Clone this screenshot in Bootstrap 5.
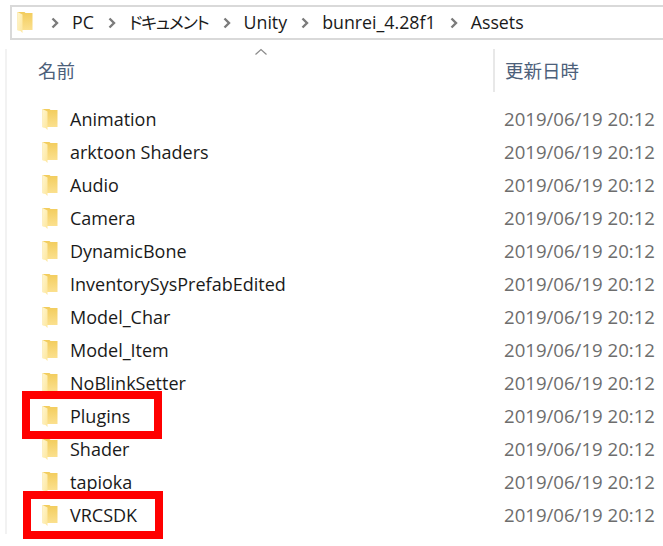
<!DOCTYPE html>
<html lang="ja">

<head>
    <meta charset="UTF-8">
    <meta name="viewport" content="width=device-width, initial-scale=1">
    <title>Assets</title>
    <link href="https://cdn.jsdelivr.net/npm/bootstrap@5.3.0/dist/css/bootstrap.min.css" rel="stylesheet">
    <style>
        html, body {
            height: 546px;
            overflow: hidden;
            background: #fff;
        }

        body {
            font-family: "Open Sans", "Noto Sans CJK JP", sans-serif;
            font-size: 18px;
            color: #1a1a1a;
            padding-top: 5px;
        }

        .crumb-bar {
            height: 35px;
            margin-left: 10px;
            padding-left: 5px;
            border: 2px solid #d9d9d9;
            border-right: 0;
            font-size: 17.800px;
        }

        .crumb-bar .folder-ico {
            margin-right: 4px;
        }

        .crumb-sep {
            margin: 0 13px 0 14px;
            flex: none;
        }

        .crumb-jp {
            font-feature-settings: "palt";
            letter-spacing: -1.200px;
            font-size: 17px;
        }

        .file-pane {
            margin: 9px 0 0 5px;
            height: 485px;
            border-left: 2px solid #f2f2f2;
        }

        .sort-mark {
            position: absolute;
            left: 247px;
            top: -1px;
        }

        .head-row {
            height: 43px;
            color: #4c607a;
            font-size: 18.500px;
        }

        .head-name {
            width: 486px;
            padding-left: 31px;
        }

        .head-date {
            height: 43px;
            padding-left: 10px;
            border-left: 2px solid #e8e8e8;
        }

        .file-list {
            margin-top: 11px;
        }

        .file-row {
            height: 33px;
        }

        .file-name {
            width: 497px;
            padding-left: 35px;
            flex: none;
            display: flex;
            align-items: center;
        }

        .file-name svg {
            margin-right: 12px;
            flex: none;
        }

        .file-date {
            color: #6d6d6d;
            font-size: 18.600px;
            padding-bottom: 2px;
            white-space: nowrap;
        }

        .red-box {
            position: absolute;
            width: 140px;
            height: 48px;
            border: 8px solid #f00;
        }

        .box-plugins {
            left: 22px;
            top: 391px;
        }

        .box-vrcsdk {
            left: 23px;
            top: 491px;
        }
    </style>
</head>

<body class="position-relative">
    <svg width="0" height="0" class="position-absolute">
        <defs>
            <linearGradient id="folderFront" x1="0" y1="0" x2="1" y2="1">
                <stop offset="0" stop-color="#fff6cf" />
                <stop offset="1" stop-color="#fde69c" />
            </linearGradient>
            <linearGradient id="folderBack" x1="0" y1="0" x2="0" y2="1">
                <stop offset="0" stop-color="#f2cc5c" />
                <stop offset="1" stop-color="#fbe08e" />
            </linearGradient>
            <symbol id="folder" viewBox="0 0 15 21">
                <path d="M0 0h7l1 1h7v17H0z" fill="url(#folderBack)" />
                <path d="M0 0l5 2.500V21l-2-2-3-.500z" fill="url(#folderFront)" />
            </symbol>
            <symbol id="chev" viewBox="0 0 8 12">
                <path d="M1.500 1.500L6 6l-4.500 4.500" fill="none" stroke="#7b7b7b" stroke-width="2.400" />
            </symbol>
        </defs>
    </svg>

    <!-- Address bar -->
    <div class="crumb-bar d-flex align-items-center">
        <svg class="folder-ico" width="16" height="21"><use href="#folder" /></svg>
        <svg class="crumb-sep" width="8" height="12"><use href="#chev" /></svg>
        <span>PC</span>
        <svg class="crumb-sep" width="8" height="12"><use href="#chev" /></svg>
        <span class="crumb-jp">ドキュメント</span>
        <svg class="crumb-sep" width="8" height="12"><use href="#chev" /></svg>
        <span>Unity</span>
        <svg class="crumb-sep" width="8" height="12"><use href="#chev" /></svg>
        <span>bunrei_4.28f1</span>
        <svg class="crumb-sep" width="8" height="12"><use href="#chev" /></svg>
        <span>Assets</span>
    </div>

    <!-- File list -->
    <div class="file-pane position-relative">
        <svg class="sort-mark" width="14" height="8" viewBox="0 0 14 8">
            <path d="M1.500 6.500L7 1.500l5.500 5" fill="none" stroke="#8a8a8a" stroke-width="1.200" />
        </svg>
        <div class="head-row d-flex align-items-center">
            <div class="head-name">名前</div>
            <div class="head-date d-flex align-items-center">更新日時</div>
        </div>
        <div class="file-list" id="fileList"></div>
    </div>

    <div class="red-box box-plugins"></div>
    <div class="red-box box-vrcsdk"></div>

    <script src="https://cdn.jsdelivr.net/npm/bootstrap@5.3.0/dist/js/bootstrap.bundle.min.js"></script>
    <script>
        const folders = ["Animation", "arktoon Shaders", "Audio", "Camera", "DynamicBone",
            "InventorySysPrefabEdited", "Model_Char", "Model_Item", "NoBlinkSetter",
            "Plugins", "Shader", "tapioka", "VRCSDK"];

        document.getElementById("fileList").innerHTML = folders.map(name => `
            <div class="file-row d-flex align-items-center">
                <div class="file-name"><svg width="16" height="21"><use href="#folder" /></svg><span>${name}</span></div>
                <div class="file-date">2019/06/19 20:12</div>
            </div>
        `).join("");
    </script>
</body>

</html>
